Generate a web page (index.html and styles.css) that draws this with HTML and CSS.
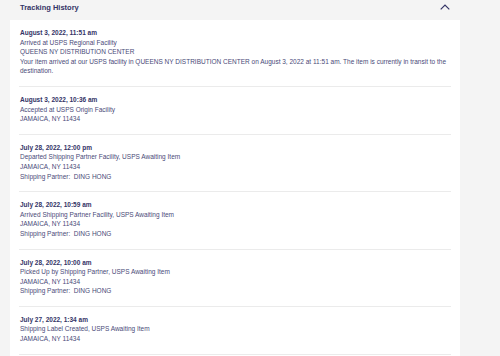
FILE: index.html
```html
<!DOCTYPE html>
<html>
<head>
<meta charset="utf-8">
<link rel="stylesheet" href="styles.css">
</head>
<body>
<div class="page">
  <div class="header">
    <h2 class="title">Tracking History</h2>
    <svg class="chevron" width="10" height="6" viewBox="0 0 10 6"><path d="M0.7 5.3 L5 1 L9.3 5.3" fill="none" stroke="#333366" stroke-width="1.2"/></svg>
  </div>
  <div class="card">
    <div class="entry">
      <div class="date">August 3, 2022, 11:51 am</div>
      <div class="line">Arrived at USPS Regional Facility</div>
      <div class="line">QUEENS NY DISTRIBUTION CENTER</div>
      <div class="line">Your item arrived at our USPS facility in QUEENS NY DISTRIBUTION CENTER on August 3, 2022 at 11:51 am. The item is currently in transit to the destination.</div>
    </div>
    <div class="entry">
      <div class="date">August 3, 2022, 10:36 am</div>
      <div class="line">Accepted at USPS Origin Facility</div>
      <div class="line">JAMAICA, NY 11434</div>
    </div>
    <div class="entry">
      <div class="date">July 28, 2022, 12:00 pm</div>
      <div class="line">Departed Shipping Partner Facility, USPS Awaiting Item</div>
      <div class="line">JAMAICA, NY 11434</div>
      <div class="line">Shipping Partner:&nbsp; DING HONG</div>
    </div>
    <div class="entry">
      <div class="date">July 28, 2022, 10:59 am</div>
      <div class="line">Arrived Shipping Partner Facility, USPS Awaiting Item</div>
      <div class="line">JAMAICA, NY 11434</div>
      <div class="line">Shipping Partner:&nbsp; DING HONG</div>
    </div>
    <div class="entry">
      <div class="date">July 28, 2022, 10:00 am</div>
      <div class="line">Picked Up by Shipping Partner, USPS Awaiting Item</div>
      <div class="line">JAMAICA, NY 11434</div>
      <div class="line">Shipping Partner:&nbsp; DING HONG</div>
    </div>
    <div class="entry">
      <div class="date">July 27, 2022, 1:34 am</div>
      <div class="line">Shipping Label Created, USPS Awaiting Item</div>
      <div class="line">JAMAICA, NY 11434</div>
    </div>
  </div>
</div>
</body>
</html>
```

FILE: styles.css
```css
html, body {
  margin: 0;
  padding: 0;
  background: #f4f4f4;
  font-family: "Liberation Sans", Arial, sans-serif;
  color: #333366;
}
.page {
  padding-left: 10px;
  width: 450px;
}
.header {
  display: flex;
  justify-content: space-between;
  align-items: flex-start;
  height: 20px;
  padding: 0 10px 0 10px;
  box-sizing: border-box;
}
.title {
  margin: 0;
  padding-top: 3px;
  font-size: 7.5px;
  line-height: 9px;
  font-weight: bold;
  color: #333366;
}
.chevron {
  margin-top: 4px;
}
.card {
  background: #ffffff;
  padding: 0 9px;
  min-height: 340px;
}
.entry {
  padding: 8px 0 10px 1px;
  border-bottom: 1px solid #ebebeb;
  font-size: 6.5px;
  line-height: 9.6px;
}
.date {
  font-weight: bold;
  color: #333366;
}
.line {
  color: #4a4a78;
}
```
